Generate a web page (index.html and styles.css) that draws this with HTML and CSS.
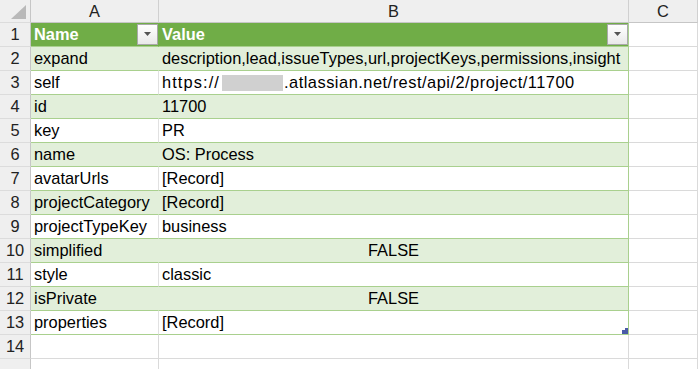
FILE: index.html
```html
<!DOCTYPE html>
<html>
<head>
<meta charset="utf-8">
<link rel="stylesheet" href="styles.css">
</head>
<body>
<div class="sheet">
  <div class="row colhead">
    <div class="rh corner"><svg width="30" height="22" viewBox="0 0 30 22"><polygon points="11,19 26,19 26,5" fill="#b9b9b9"/></svg></div>
    <div class="ch">A</div>
    <div class="ch">B</div>
    <div class="ch">C</div>
  </div>
  <div class="row">
    <div class="rh">1</div>
    <div class="c th">Name<span class="dd"><svg width="9" height="5" viewBox="0 0 9 5"><polygon points="1,0 8,0 4.5,4" fill="#555"/></svg></span></div>
    <div class="c th th-last">Value<span class="dd"><svg width="9" height="5" viewBox="0 0 9 5"><polygon points="1,0 8,0 4.5,4" fill="#555"/></svg></span></div>
    <div class="c out"></div>
  </div>
  <div class="row">
    <div class="rh">2</div>
    <div class="c band">expand</div>
    <div class="c band last">description,lead,issueTypes,url,projectKeys,permissions,insight</div>
    <div class="c out"></div>
  </div>
  <div class="row">
    <div class="rh">3</div>
    <div class="c plain">self</div>
    <div class="c plain last"><span class="proto">https://</span><span class="blur"></span><span class="host">.atlassian.net/rest/api/2/project/11700</span></div>
    <div class="c out"></div>
  </div>
  <div class="row">
    <div class="rh">4</div>
    <div class="c band">id</div>
    <div class="c band last">11700</div>
    <div class="c out"></div>
  </div>
  <div class="row">
    <div class="rh">5</div>
    <div class="c plain">key</div>
    <div class="c plain last">PR</div>
    <div class="c out"></div>
  </div>
  <div class="row">
    <div class="rh">6</div>
    <div class="c band">name</div>
    <div class="c band last">OS: Process</div>
    <div class="c out"></div>
  </div>
  <div class="row">
    <div class="rh">7</div>
    <div class="c plain">avatarUrls</div>
    <div class="c plain last">[Record]</div>
    <div class="c out"></div>
  </div>
  <div class="row">
    <div class="rh">8</div>
    <div class="c band">projectCategory</div>
    <div class="c band last">[Record]</div>
    <div class="c out"></div>
  </div>
  <div class="row">
    <div class="rh">9</div>
    <div class="c plain">projectTypeKey</div>
    <div class="c plain last">business</div>
    <div class="c out"></div>
  </div>
  <div class="row">
    <div class="rh">10</div>
    <div class="c band">simplified</div>
    <div class="c band last center">FALSE</div>
    <div class="c out"></div>
  </div>
  <div class="row">
    <div class="rh">11</div>
    <div class="c plain">style</div>
    <div class="c plain last">classic</div>
    <div class="c out"></div>
  </div>
  <div class="row">
    <div class="rh">12</div>
    <div class="c band">isPrivate</div>
    <div class="c band last center">FALSE</div>
    <div class="c out"></div>
  </div>
  <div class="row">
    <div class="rh">13</div>
    <div class="c plain">properties</div>
    <div class="c plain last handle-cell">[Record]<span class="handle"><span class="h1"></span><span class="h2"></span></span></div>
    <div class="c out"></div>
  </div>
  <div class="row">
    <div class="rh">14</div>
    <div class="c out"></div>
    <div class="c out"></div>
    <div class="c out"></div>
  </div>
  <div class="row row-cut">
    <div class="rh"></div>
    <div class="c out"></div>
    <div class="c out"></div>
    <div class="c out"></div>
  </div>
</div>
</body>
</html>
```
FILE: styles.css
```css
html, body {
  margin: 0;
  padding: 0;
  background: #ffffff;
  overflow: hidden;
}
.sheet {
  width: 698px;
  height: 369px;
  overflow: hidden;
  font-family: "Liberation Sans", Arial, sans-serif;
  font-size: 16.4px;
  color: #000;
}
.row {
  display: grid;
  grid-template-columns: 31px 128px 470px 1fr;
  height: 24px;
}
.row > div {
  box-sizing: border-box;
  border-right: 1px solid #dadada;
  border-bottom: 1px solid #dadada;
  display: flex;
  align-items: center;
  white-space: nowrap;
  overflow: hidden;
}
.colhead {
  height: 23px;
}
.colhead > div {
  background: #efefef;
  border-right-color: #d0d0d0;
  border-bottom-color: #c6c6c6;
  justify-content: center;
  color: #222;
}
.rh {
  background: #efefef;
  justify-content: center;
  color: #222;
  border-right-color: #c6c6c6 !important;
  border-bottom-color: #dcdcdc !important;
}
.corner {
  padding: 0;
}
.corner svg {
  display: block;
}
.c {
  padding: 0 3px;
}
.th {
  background: #70ad47;
  color: #ffffff;
  font-weight: bold;
  border-right-color: #70ad47 !important;
  border-bottom-color: #a9d08e !important;
  position: relative;
}
.th-last {
  border-right-color: #a9d08e !important;
}
.dd {
  position: absolute;
  right: 0;
  top: 1px;
  width: 21px;
  height: 21px;
  box-sizing: border-box;
  border: 1px solid #a9a9a9;
  background: linear-gradient(#ffffff, #e9e9e9);
  display: flex;
  align-items: center;
  justify-content: center;
}
.dd svg {
  display: block;
}
.band {
  background: #e2efda;
  border-right-color: #e2efda !important;
  border-bottom-color: #a9d08e !important;
}
.plain {
  background: #ffffff;
  border-right-color: #e1e1e1 !important;
  border-bottom-color: #a9d08e !important;
}
.last {
  border-right-color: #a9d08e !important;
}
.center {
  justify-content: center;
}
.proto {
  letter-spacing: 1.1px;
}
.host {
  letter-spacing: 0.5px;
}
.blur {
  display: inline-block;
  width: 61px;
  height: 16px;
  margin-left: 2px;
  margin-right: 1px;
  background: #d0d0d0;
}
.handle-cell {
  position: relative;
  overflow: visible !important;
}
.handle {
  position: absolute;
  right: 0;
  bottom: 0;
  width: 6px;
  height: 6px;
}
.h1 {
  position: absolute;
  left: 0;
  bottom: 0;
  width: 6px;
  height: 4px;
  background: #4a5aa8;
}
.h2 {
  position: absolute;
  right: 0;
  top: 0;
  width: 3px;
  height: 2px;
  background: #4a5aa8;
}
.out {
  background: #ffffff;
}
```
